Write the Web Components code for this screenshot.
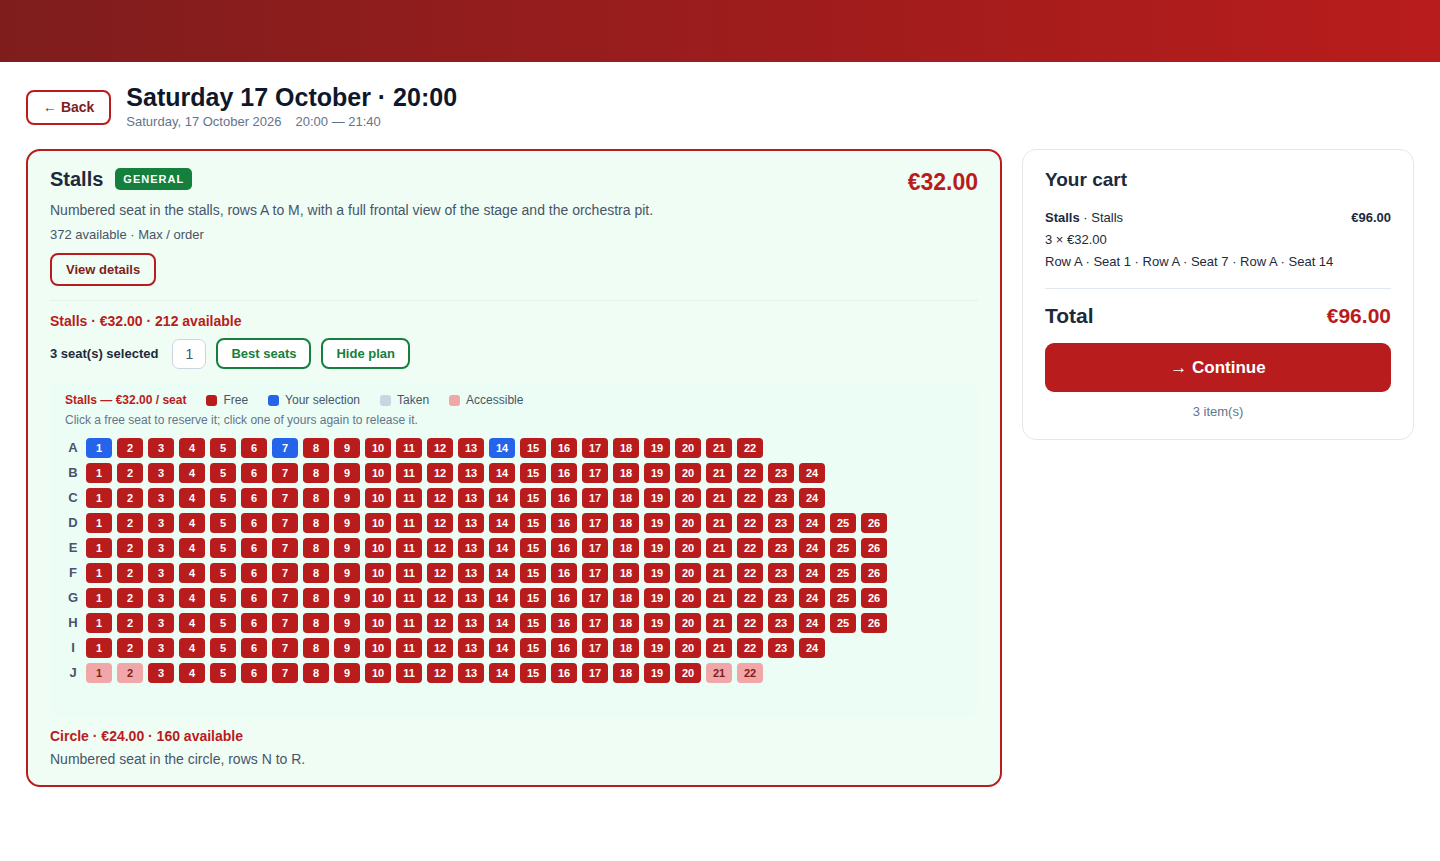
<!DOCTYPE html>
<html lang="en">
<head>
<meta charset="utf-8">
<meta name="viewport" content="width=device-width, initial-scale=1">
<title>Saturday 17 October · 20:00</title>
<style>
  body {
    margin: 0;
    background: #fff;
    color: #1e293b;
    font-family: "Liberation Sans", Arial, sans-serif;
    font-size: 14px;
  }
</style>
</head>
<body>
<booking-page>
  <session-header slot="header" heading="Saturday 17 October · 20:00" date="Saturday, 17 October 2026" hours="20:00 — 21:40"></session-header>
  <ticket-card heading="Stalls" tag="General" price="€32.00">
    <span slot="description">Numbered seat in the stalls, rows A to M, with a full frontal view of the stage and the orchestra pit.</span>
    <span slot="stock">372 available · Max / order</span>
    <ticket-zone heading="Stalls · €32.00 · 212 available">
      <seat-picker selected="3"></seat-picker>
      <seat-plan heading="Stalls — €32.00 / seat"></seat-plan>
    </ticket-zone>
    <ticket-zone heading="Circle · €24.00 · 160 available">Numbered seat in the circle, rows N to R.</ticket-zone>
  </ticket-card>
  <cart-summary slot="aside" total="€96.00" count="3">
    <cart-line name="Stalls" zone="Stalls" amount="€96.00" unit="3 × €32.00">Row A · Seat 1 · Row A · Seat 7 · Row A · Seat 14</cart-line>
  </cart-summary>
</booking-page>

<script>
class BookingPage extends HTMLElement {
  connectedCallback() {
    this.attachShadow({ mode: 'open' });
    this.shadowRoot.innerHTML = `
      <style>
        :host { display: block; }
        .banner {
          height: 62px;
          background: linear-gradient(90deg, #7f1d1d, #b91c1c);
        }
        main { padding: 20px 26px 40px; }
        .columns {
          display: grid;
          grid-template-columns: minmax(0, 976fr) minmax(0, 392fr);
          gap: 20px;
          align-items: start;
          margin-top: 17px;
        }
      </style>
      <div class="banner"></div>
      <main>
        <slot name="header"></slot>
        <div class="columns">
          <slot></slot>
          <slot name="aside"></slot>
        </div>
      </main>
    `;
  }
}

class OutlineButton extends HTMLElement {
  connectedCallback() {
    this.attachShadow({ mode: 'open' });
    this.shadowRoot.innerHTML = `
      <style>
        :host { display: block; width: fit-content; }
        button {
          display: block;
          box-sizing: border-box;
          height: 33px;
          padding: 0 14px;
          border: 2px solid #b91c1c;
          border-radius: 8px;
          background: transparent;
          color: #7f1d1d;
          font: bold 13px/20px "Liberation Sans", Arial, sans-serif;
          cursor: pointer;
        }
        :host([tone="green"]) button {
          height: 31px;
          padding: 0 13px;
          border-color: #15803d;
          background: #fff;
          color: #15803d;
        }
        :host([size="large"]) button {
          height: 35px;
          padding: 0 15px;
          font-size: 14px;
        }
      </style>
      <button type="button"><slot></slot></button>
    `;
  }
}

class SessionHeader extends HTMLElement {
  connectedCallback() {
    this.attachShadow({ mode: 'open' });
    this.shadowRoot.innerHTML = `
      <style>
        :host {
          display: flex;
          align-items: center;
          gap: 15px;
        }
        h1 {
          margin: 0;
          color: #0f172a;
          font-size: 25px;
          line-height: 30px;
        }
        p {
          display: flex;
          gap: 14px;
          margin: 0;
          color: #64748b;
          font-size: 13px;
          line-height: 20px;
        }
      </style>
      <outline-button size="large">← Back</outline-button>
      <div>
        <h1>${this.getAttribute('heading')}</h1>
        <p><span>${this.getAttribute('date')}</span><span>${this.getAttribute('hours')}</span></p>
      </div>
    `;
  }
}

class TicketCard extends HTMLElement {
  connectedCallback() {
    this.attachShadow({ mode: 'open' });
    this.shadowRoot.innerHTML = `
      <style>
        :host {
          display: block;
          padding: 16px 22px 14px;
          border: 2px solid #b91c1c;
          border-radius: 14px;
          background: #f0fdf4;
        }
        .top {
          display: flex;
          align-items: flex-start;
          justify-content: space-between;
        }
        .name {
          display: flex;
          align-items: center;
          gap: 12px;
        }
        h2 {
          margin: 0;
          font-size: 20px;
          line-height: 24px;
        }
        .tag {
          padding: 0 8px;
          border-radius: 5px;
          background: #15803d;
          color: #fff;
          font-size: 11px;
          font-weight: bold;
          line-height: 22px;
          letter-spacing: 1px;
          text-transform: uppercase;
        }
        .price {
          color: #b91c1c;
          font-size: 23px;
          font-weight: bold;
          line-height: 30px;
        }
        p { margin: 0; color: #475569; }
        .description { margin-top: 1px; line-height: 24px; }
        .stock { font-size: 13px; line-height: 25px; }
        outline-button { margin-top: 6px; }
        .zones {
          margin-top: 14px;
          border-top: 1px solid #e2f3ea;
          padding-top: 9px;
        }
      </style>
      <div class="top">
        <div class="name">
          <h2>${this.getAttribute('heading')}</h2>
          <span class="tag">${this.getAttribute('tag')}</span>
        </div>
        <span class="price">${this.getAttribute('price')}</span>
      </div>
      <p class="description"><slot name="description"></slot></p>
      <p class="stock"><slot name="stock"></slot></p>
      <outline-button>View details</outline-button>
      <div class="zones"><slot></slot></div>
    `;
  }
}

class TicketZone extends HTMLElement {
  connectedCallback() {
    this.attachShadow({ mode: 'open' });
    this.shadowRoot.innerHTML = `
      <style>
        :host {
          display: block;
          color: #475569;
          line-height: 24px;
        }
        h3 {
          margin: 0;
          color: #b91c1c;
          font-size: 14px;
          line-height: 22px;
        }
      </style>
      <h3>${this.getAttribute('heading')}</h3>
      <slot></slot>
    `;
  }
}

class SeatPicker extends HTMLElement {
  connectedCallback() {
    this.attachShadow({ mode: 'open' });
    this.shadowRoot.innerHTML = `
      <style>
        :host {
          display: flex;
          align-items: center;
          gap: 10px;
          margin-top: 6px;
          color: #1e293b;
        }
        label {
          margin-right: 4px;
          font-size: 13px;
          font-weight: bold;
          line-height: 20px;
        }
        input {
          box-sizing: border-box;
          width: 34px;
          height: 30px;
          padding: 0;
          border: 1px solid #cbd5e1;
          border-radius: 7px;
          background: #fff;
          color: #475569;
          font: 14px "Liberation Sans", Arial, sans-serif;
          text-align: center;
        }
      </style>
      <label for="quantity">${this.getAttribute('selected')} seat(s) selected</label>
      <input id="quantity" type="text" inputmode="numeric" value="1">
      <outline-button tone="green">Best seats</outline-button>
      <outline-button tone="green">Hide plan</outline-button>
    `;
  }
}

class SeatPlan extends HTMLElement {
  connectedCallback() {
    const rows = { A: 22, B: 24, C: 24, D: 26, E: 26, F: 26, G: 26, H: 26, I: 24, J: 22 };
    const selected = ['A1', 'A7', 'A14'];
    const accessible = ['J1', 'J2', 'J21', 'J22'];

    const seat = (row, number) => {
      const id = row + number;
      const state = selected.includes(id) ? 'selected' : accessible.includes(id) ? 'accessible' : 'free';
      return `<button type="button" class="${state}" aria-label="Row ${row}, seat ${number}">${number}</button>`;
    };

    this.attachShadow({ mode: 'open' });
    this.shadowRoot.innerHTML = `
      <style>
        :host {
          display: block;
          margin: 13px 0 8px;
          padding: 8px 15px 34px;
          border-radius: 10px;
          background: #ecfdf5;
        }
        .free { background: #b91c1c; }
        .selected { background: #2563eb; }
        .taken { background: #cbd5e1; }
        .accessible { background: #f1a7a7; }
        .legend {
          display: flex;
          flex-wrap: wrap;
          gap: 20px;
          font-size: 12px;
          line-height: 20px;
        }
        .legend strong { color: #b91c1c; }
        .legend span {
          display: flex;
          align-items: center;
          gap: 6px;
        }
        .legend i {
          width: 11px;
          height: 11px;
          border-radius: 3px;
        }
        p {
          margin: 0;
          color: #64748b;
          font-size: 12px;
          line-height: 20px;
        }
        .rows {
          display: grid;
          gap: 5px;
          margin-top: 8px;
        }
        .row { display: flex; gap: 5px; }
        .row b {
          width: 16px;
          font-size: 13px;
          line-height: 20px;
          text-align: center;
        }
        button {
          width: 26px;
          height: 20px;
          padding: 0;
          border: 0;
          border-radius: 4px;
          color: #fff;
          font: bold 11px/20px "Liberation Sans", Arial, sans-serif;
          cursor: pointer;
        }
        button.accessible { color: #7f1d1d; }
      </style>
      <div class="legend">
        <strong>${this.getAttribute('heading')}</strong>
        <span><i class="free"></i>Free</span>
        <span><i class="selected"></i>Your selection</span>
        <span><i class="taken"></i>Taken</span>
        <span><i class="accessible"></i>Accessible</span>
      </div>
      <p>Click a free seat to reserve it; click one of yours again to release it.</p>
      <div class="rows">
        ${Object.entries(rows).map(([row, count]) => `
          <div class="row">
            <b>${row}</b>
            ${Array.from({ length: count }, (_, i) => seat(row, i + 1)).join('')}
          </div>
        `).join('')}
      </div>
    `;
  }
}

class CartLine extends HTMLElement {
  connectedCallback() {
    this.attachShadow({ mode: 'open' });
    this.shadowRoot.innerHTML = `
      <style>
        :host {
          display: block;
          font-size: 13px;
          line-height: 22px;
        }
        .main { display: flex; justify-content: space-between; }
      </style>
      <div class="main">
        <span><b>${this.getAttribute('name')}</b> · ${this.getAttribute('zone')}</span>
        <b>${this.getAttribute('amount')}</b>
      </div>
      <div>${this.getAttribute('unit')}</div>
      <div><slot></slot></div>
    `;
  }
}

class CartSummary extends HTMLElement {
  connectedCallback() {
    this.attachShadow({ mode: 'open' });
    this.shadowRoot.innerHTML = `
      <style>
        :host {
          display: block;
          padding: 16px 22px 17px;
          border: 1px solid #e5e7eb;
          border-radius: 14px;
          background: #fff;
        }
        h2 {
          margin: 0 0 13px;
          font-size: 19px;
          line-height: 28px;
        }
        .total {
          display: flex;
          justify-content: space-between;
          margin-top: 15px;
          padding-top: 12px;
          border-top: 1px solid #e2e8f0;
          font-size: 21px;
          font-weight: bold;
          line-height: 30px;
        }
        .total span + span { color: #b91c1c; }
        button {
          display: block;
          width: 100%;
          height: 49px;
          margin-top: 12px;
          border: 0;
          border-radius: 9px;
          background: #b91c1c;
          color: #fff;
          font: bold 17px "Liberation Sans", Arial, sans-serif;
          cursor: pointer;
        }
        p {
          margin: 10px 0 0;
          color: #64748b;
          font-size: 13px;
          line-height: 20px;
          text-align: center;
        }
      </style>
      <h2>Your cart</h2>
      <slot></slot>
      <div class="total"><span>Total</span><span>${this.getAttribute('total')}</span></div>
      <button type="button">→ Continue</button>
      <p>${this.getAttribute('count')} item(s)</p>
    `;
  }
}

customElements.define('booking-page', BookingPage);
customElements.define('outline-button', OutlineButton);
customElements.define('session-header', SessionHeader);
customElements.define('ticket-card', TicketCard);
customElements.define('ticket-zone', TicketZone);
customElements.define('seat-picker', SeatPicker);
customElements.define('seat-plan', SeatPlan);
customElements.define('cart-line', CartLine);
customElements.define('cart-summary', CartSummary);
</script>
</body>
</html>
